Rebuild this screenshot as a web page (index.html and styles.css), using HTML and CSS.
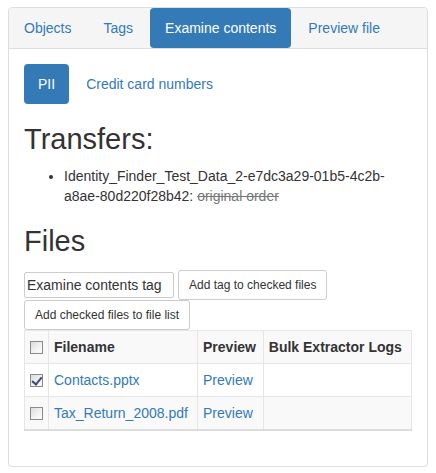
FILE: index.html
```html
<!DOCTYPE html>
<html>
<head>
<meta charset="utf-8">
<link rel="stylesheet" href="styles.css">
</head>
<body>
<div class="panel">
  <div class="panel-heading">
    <ul class="pills">
      <li><a href="#">Objects</a></li>
      <li><a href="#">Tags</a></li>
      <li class="active"><a href="#">Examine contents</a></li>
      <li><a href="#">Preview file</a></li>
    </ul>
  </div>
  <div class="panel-body">
    <ul class="pills">
      <li class="active"><a class="narrow" href="#">PII</a></li>
      <li><a href="#">Credit card numbers</a></li>
    </ul>
    <h1>Transfers:</h1>
    <ul class="transfers">
      <li>Identity_Finder_Test_Data_2-e7dc3a29-01b5-4c2b-a8ae-80d220f28b42: <span class="muted">original order</span></li>
    </ul>
    <h1>Files</h1>
    <div class="actions">
      <input class="tag-input" type="text" value="Examine contents tag">
      <button class="btn">Add tag to checked files</button>
      <button class="btn">Add checked files to file list</button>
    </div>
    <table class="files">
      <tr class="odd">
        <td class="cb"><input type="checkbox"></td>
        <th>Filename</th>
        <th>Preview</th>
        <th>Bulk Extractor Logs</th>
      </tr>
      <tr>
        <td class="cb"><input type="checkbox" checked></td>
        <td><a href="#">Contacts.pptx</a></td>
        <td><a href="#">Preview</a></td>
        <td></td>
      </tr>
      <tr class="odd last">
        <td class="cb"><input type="checkbox"></td>
        <td><a href="#">Tax_Return_2008.pdf</a></td>
        <td><a href="#">Preview</a></td>
        <td></td>
      </tr>
    </table>
  </div>
</div>
</body>
</html>
```

FILE: styles.css
```css
* { box-sizing: border-box; }
body {
  margin: 7px 8px 8px;
  font-family: "Liberation Sans", Arial, sans-serif;
  font-size: 14px;
  line-height: 20px;
  color: #333;
  background: #fff;
}
a { color: #337ab7; text-decoration: none; }
.panel {
  border: 1px solid #ddd;
  border-radius: 4px;
  box-shadow: 0 1px 1px rgba(0,0,0,.05);
  background: #fff;
}
.panel-heading {
  background: #f5f5f5;
  border-bottom: 1px solid #ddd;
  border-radius: 3px 3px 0 0;
}
.pills {
  list-style: none;
  margin: 0;
  padding: 0;
  display: flex;
}
.pills li + li { margin-left: 2px; }
.pills a {
  display: block;
  padding: 10px 15px;
  border-radius: 4px;
}
.pills a.narrow { padding: 10px 14px; }
.pills .active a {
  background: #337ab7;
  color: #fff;
}
.panel-body { padding: 15px 15px 15px; }
h1 {
  font-size: 29px;
  font-weight: normal;
  line-height: 1.1;
  margin: 20px 0 10px;
}
.transfers {
  margin: 0 0 10px;
  padding-left: 40px;
}
.muted { color: #777; text-decoration: line-through; }
.actions {
  display: flex;
  flex-wrap: wrap;
  align-items: center;
  column-gap: 4px;
  margin-top: 12px;
}
.tag-input {
  width: 150px;
  height: 26px;
  border: 1px solid #ccc;
  border-radius: 2px;
  padding: 0 2px;
  font-family: "Liberation Sans", Arial, sans-serif;
  font-size: 14px;
  color: #333;
}
.btn {
  height: 30px;
  padding: 5px 10px;
  font-family: "Liberation Sans", Arial, sans-serif;
  font-size: 12px;
  line-height: 18px;
  color: #333;
  background: #fff;
  border: 1px solid #ccc;
  border-radius: 3px;
}
.files {
  width: 100%;
  border-collapse: collapse;
  margin-bottom: 20px;
}
.files td, .files th {
  border: 1px solid #e6e6e6;
  padding: 6px 5px;
  text-align: left;
  vertical-align: top;
  line-height: 20px;
}
.files th { font-weight: bold; }
.files .odd { background: #f9f9f9; }
.files .last td { border-bottom: 2px solid #ddd; }
.files .cb { width: 24px; }
.files input[type=checkbox] {
  -webkit-appearance: none;
  appearance: none;
  position: relative;
  margin: 0;
  width: 13px;
  height: 13px;
  vertical-align: -2px;
  border: 1px solid #8a8a8a;
  border-radius: 0;
  background: linear-gradient(135deg, #dcdcdc 0%, #f4f4f4 60%, #fbfbfb 100%);
}
.files input[type=checkbox]:checked::after {
  content: "";
  position: absolute;
  left: 3px;
  top: 0px;
  width: 4px;
  height: 8px;
  border-right: 2px solid #3b4a7a;
  border-bottom: 2px solid #3b4a7a;
  transform: rotate(40deg);
}
```
